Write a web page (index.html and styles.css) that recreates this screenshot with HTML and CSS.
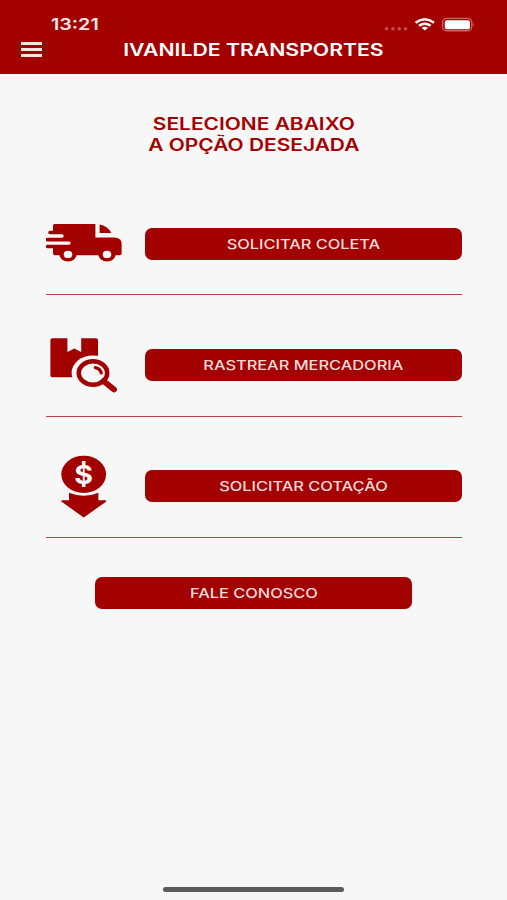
FILE: index.html
```
<!DOCTYPE html>
<html lang="pt-BR">
<head>
  <meta charset="utf-8">
  <title>Ivanilde Transportes</title>
  <link rel="stylesheet" href="styles.css">
</head>
<body>
  <header>
    <div class="status-bar">
      <span class="time wide">13:21</span>
      <svg class="status-icons" width="90" height="16" viewBox="0 0 90 16">
        <g fill="#fff" opacity="0.3">
          <circle cx="2.5" cy="12.7" r="1.8"/>
          <circle cx="9" cy="12.7" r="1.8"/>
          <circle cx="15.3" cy="12.7" r="1.8"/>
          <circle cx="21.5" cy="12.7" r="1.8"/>
        </g>
        <g fill="none" stroke="#fff" stroke-width="2.4">
          <path d="M31.6 6.7Q40.8 -0.1 50 6.7"/>
          <path d="M35 9.8Q40.8 5.6 46.6 9.8"/>
        </g>
        <path d="M37.6 11.7Q40.8 9.7 44 11.7L40.8 14.4Z" fill="#fff"/>
        <rect x="58.6" y="2.4" width="29.2" height="12.4" rx="4" fill="none" stroke="#fff" stroke-opacity="0.4" stroke-width="1.4"/>
        <rect x="60.8" y="4.2" width="25.2" height="9" rx="2" fill="#fff"/>
        <path d="M89 6.8Q90.4 8.6 89 10.4Z" fill="#fff" opacity="0.5"/>
      </svg>
    </div>
    <div class="app-bar">
      <button class="menu"><i></i><i></i><i></i></button>
      <h1><span class="wide">IVANILDE TRANSPORTES</span></h1>
    </div>
  </header>
  <main>
    <h2><span class="wide">SELECIONE ABAIXO<br>A OPÇÃO DESEJADA</span></h2>
    <ul class="options">
      <li>
        <!-- truck -->
        <svg class="truck" width="76" height="38" viewBox="0 0 76 38">
          <path d="M8.5 0H49.4V13.4H68Q75.6 14 75.6 19V29.5Q75.6 31.2 73.6 31.2H9Q7 31.2 7 29.5V24.2H1.5A1.5 1.5 0 0 1 1.5 20.8H23A1.7 1.7 0 0 0 23 17.4H1.5A1.5 1.5 0 0 1 1.5 13.7H16A1.7 1.7 0 0 0 16 10.3H4A1.5 1.5 0 0 1 4 6.7H7V1.5Q7 0 8.5 0Z"/>
          <path d="M53.6 0.4Q61.5 1.4 65.4 9H53.6Z"/>
          <ellipse cx="22" cy="30.4" rx="8.6" ry="7.1"/>
          <ellipse cx="61" cy="30.4" rx="8.6" ry="7.1"/>
          <ellipse class="cut" cx="22" cy="30.4" rx="4.3" ry="3.7"/>
          <ellipse class="cut" cx="61" cy="30.4" rx="4.3" ry="3.7"/>
        </svg>
        <button class="btn"><span class="wide">SOLICITAR COLETA</span></button>
      </li>
      <li>
        <!-- package with magnifier -->
        <svg class="package" width="68" height="55" viewBox="0 0 68 55">
          <path d="M2.4 0.3H17.4V14L24.3 10.4L31.2 14V0.3H46Q48 0.3 48 2.3V39.2H2.4Q0.4 39.2 0.4 37.2V2.3Q0.4 0.3 2.4 0.3Z"/>
          <ellipse class="cut" cx="43" cy="35" rx="21.4" ry="17.6"/>
          <ellipse class="line" cx="43" cy="35" rx="14.2" ry="11.7" stroke-width="4.6"/>
          <path class="line" d="M53.5 43L64 51.5" stroke-width="5.8"/>
          <path class="line" d="M45.4 29.6Q50.3 30.8 51.2 34.8" stroke-width="3.3"/>
        </svg>
        <button class="btn"><span class="wide">RASTREAR MERCADORIA</span></button>
      </li>
      <li>
        <!-- coin over down arrow -->
        <svg class="coin" width="46" height="63" viewBox="0 0 46 63">
          <ellipse cx="22.7" cy="19.3" rx="22.4" ry="18.6"/>
          <path d="M8 37.8Q22.7 43.8 37.4 37.8V45.2H44.5Q46 45.8 45 46.8L22.7 62.4L0.6 46.8Q-0.4 45.8 1 45.2H8Z"/>
          <path class="cut" d="M20.9 6H24.5V10H20.9ZM20.9 28H24.5V32H20.9Z"/>
          <text class="dollar" transform="translate(22.7 28.6) scale(1.1 1)" text-anchor="middle">$</text>
        </svg>
        <button class="btn"><span class="wide">SOLICITAR COTAÇÃO</span></button>
      </li>
    </ul>
    <button class="btn contact"><span class="wide">FALE CONOSCO</span></button>
  </main>
  <footer><div class="home-indicator"></div></footer>
</body>
</html>
```

FILE: styles.css
```
* {
  box-sizing: border-box;
}

body {
  margin: 0;
  height: 900px;
  display: flex;
  flex-direction: column;
  font-family: Inter, "Liberation Sans", sans-serif;
  background-color: #f7f7f7;
  overflow: hidden;
}

button {
  font-family: inherit;
  border: none;
  padding: 0;
  cursor: pointer;
}

/* extended letterforms */
.wide {
  display: inline-block;
  transform: scaleX(1.23);
}

header {
  height: 74px;
  background-color: #a30000;
  color: #ffffff;
}

.status-bar {
  display: flex;
  justify-content: space-between;
  height: 38px;
  padding: 16px 33px 0 51px;
}

.time {
  font-size: 16px;
  line-height: 17px;
  font-weight: 600;
  color: #fdeaea;
  transform-origin: left;
}

.app-bar {
  display: grid;
  grid-template-columns: 21px 1fr 21px;
  align-items: center;
  height: 24px;
  padding: 0 21px;
}

.menu {
  display: flex;
  flex-direction: column;
  gap: 3px;
  margin-bottom: 2px;
  background: none;
}

.menu i {
  width: 21px;
  height: 3px;
  background-color: #fbe4e4;
}

h1 {
  margin: 0;
  font-size: 17.2px;
  line-height: 24px;
  font-weight: 600;
  text-align: center;
  white-space: nowrap;
}

h1 .wide {
  transform: scaleX(1.235);
}

main {
  flex: 1;
  padding: 40px 45px 0 46px;
}

h2 {
  margin: 0;
  height: 59px;
  font-size: 17px;
  line-height: 20.5px;
  font-weight: 600;
  text-align: center;
  color: #a30000;
}

.options {
  margin: 0;
  padding: 0;
  list-style: none;
}

.options li {
  display: grid;
  grid-template-columns: 99px 317px;
  align-items: center;
  height: 121.4px;
  padding-top: 19px;
  border-bottom: 1px solid #b74444;
}

.options li:first-child {
  height: 122.4px;
  padding-top: 20px;
}

.options svg {
  fill: #a30000;
}

.options .cut {
  fill: #f7f7f7;
}

.options .line {
  fill: none;
  stroke: #a30000;
  stroke-linecap: round;
}

.package {
  margin-left: 4px;
}

.coin {
  margin-left: 15px;
}

.options .truck {
  margin-bottom: 2px;
}

.options .dollar {
  font-size: 26px;
  font-weight: 700;
  fill: #f7f7f7;
}

.btn {
  display: block;
  width: 317px;
  height: 32px;
  border-radius: 7px;
  background-color: #a30000;
  color: #fbdcdc;
  font-size: 13.3px;
  font-weight: 500;
}

.contact {
  margin: 39px 0 0 49px;
}

footer {
  display: flex;
  justify-content: center;
  padding-bottom: 8px;
}

.home-indicator {
  width: 181px;
  height: 5px;
  border-radius: 3px;
  background-color: #5c5c5c;
}
```
